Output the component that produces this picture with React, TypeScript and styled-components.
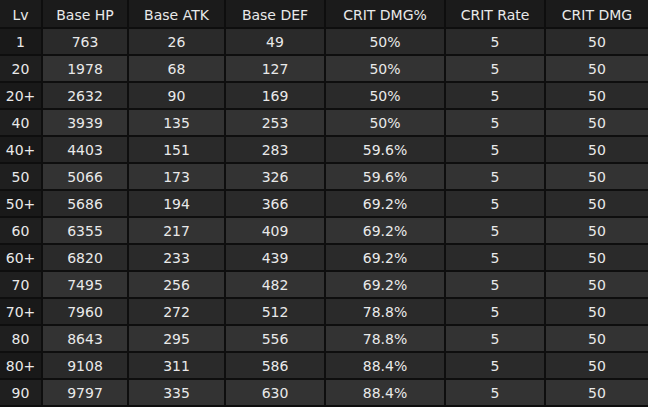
import React from 'react';
import styled, { createGlobalStyle } from 'styled-components';

const GlobalStyle = createGlobalStyle`
  html, body {
    margin: 0;
    padding: 0;
    background: #0f0f0f;
  }
`;

const columns = ['Lv', 'Base HP', 'Base ATK', 'Base DEF', 'CRIT DMG%', 'CRIT Rate', 'CRIT DMG'];

const rows: string[][] = [
  ['1', '763', '26', '49', '50%', '5', '50'],
  ['20', '1978', '68', '127', '50%', '5', '50'],
  ['20+', '2632', '90', '169', '50%', '5', '50'],
  ['40', '3939', '135', '253', '50%', '5', '50'],
  ['40+', '4403', '151', '283', '59.6%', '5', '50'],
  ['50', '5066', '173', '326', '59.6%', '5', '50'],
  ['50+', '5686', '194', '366', '69.2%', '5', '50'],
  ['60', '6355', '217', '409', '69.2%', '5', '50'],
  ['60+', '6820', '233', '439', '69.2%', '5', '50'],
  ['70', '7495', '256', '482', '69.2%', '5', '50'],
  ['70+', '7960', '272', '512', '78.8%', '5', '50'],
  ['80', '8643', '295', '556', '78.8%', '5', '50'],
  ['80+', '9108', '311', '586', '88.4%', '5', '50'],
  ['90', '9797', '335', '630', '88.4%', '5', '50'],
];

export default function App() {
  return (
    <>
      <GlobalStyle />
      <StatsGrid>
        {columns.map((c) => (
          <HeadCell key={c}>{c}</HeadCell>
        ))}
        {rows.map((r, i) =>
          r.map((v, j) =>
            j === 0 ? (
              <LvCell key={i + '-' + j} $alt={i % 2 === 1}>{v}</LvCell>
            ) : (
              <Cell key={i + '-' + j} $alt={i % 2 === 1}>{v}</Cell>
            )
          )
        )}
      </StatsGrid>
    </>
  );
}

const StatsGrid = styled.div`
  display: grid;
  grid-template-columns: 41px 84px 95px 98px 118px 98px 1fr;
  grid-template-rows: 27px repeat(14, 25px);
  gap: 2px;
  padding: 0 0 2px;
  width: 648px;
  height: 407px;
  box-sizing: border-box;
  background: #0e0e0e;
  font-family: "DejaVu Sans", "Liberation Sans", sans-serif;
  font-size: 14px;
  color: #e9e9e9;
`;

const Cell = styled.div<{ $alt: boolean }>`
  display: flex;
  align-items: center;
  justify-content: center;
  background: ${(p) => (p.$alt ? '#333333' : '#2a2a2a')};
`;

const LvCell = styled(Cell)`
  background: ${(p) => (p.$alt ? '#1f1f1f' : '#191919')};
`;

const HeadCell = styled.div`
  display: flex;
  align-items: center;
  justify-content: center;
  background: #1b1b1b;
  padding-top: 2px;
`;
